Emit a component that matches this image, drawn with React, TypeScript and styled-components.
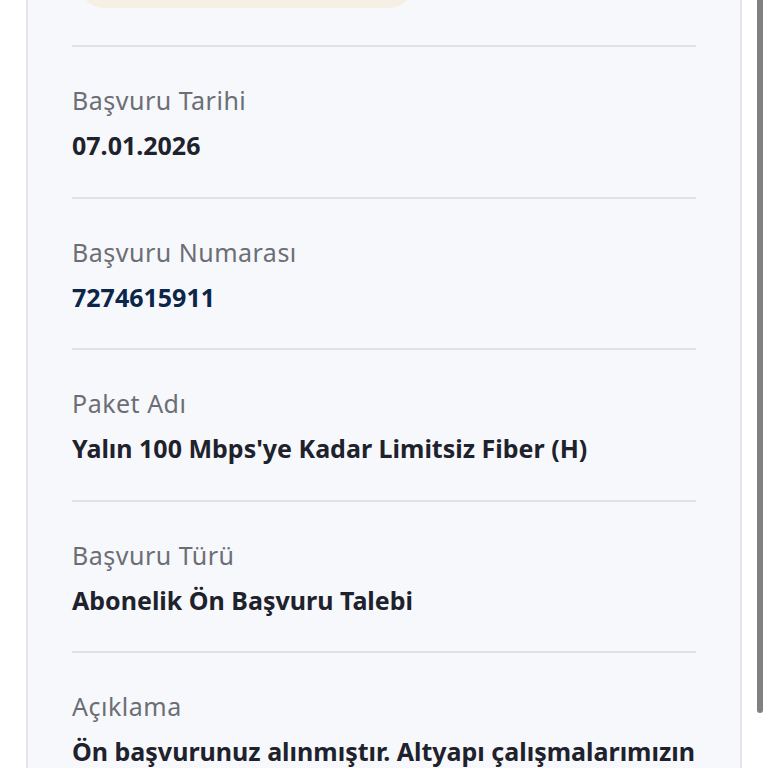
import styled, { createGlobalStyle } from 'styled-components'

const GlobalStyle = createGlobalStyle`
  html, body {
    margin: 0;
    padding: 0;
    background: #ffffff;
    overflow: hidden;
  }
  body {
    font-family: "Noto Sans", "Open Sans", "Liberation Sans", sans-serif;
  }
`

const Page = styled.div`
  width: 768px;
  height: 768px;
  overflow: hidden;
  background: #ffffff;
`

const Card = styled.div`
  margin: -40px 0 0 26px;
  width: 716px;
  box-sizing: border-box;
  background: #f7f8fb;
  border-left: 2px solid #e4e6ea;
  border-right: 2px solid #e4e6ea;
  padding: 0 44px;
`

const StatusPill = styled.div`
  margin: 0 0 37px 8px;
  width: 333px;
  height: 48px;
  border-radius: 24px;
  background: #f6efe3;
`

const Section = styled.div`
  border-top: 2px solid #dfe2e7;
  padding: 35px 0 33.5px;
`

const Label = styled.div`
  font-size: 25px;
  line-height: 36px;
  letter-spacing: 0.5px;
  color: #6b6e75;
  margin-bottom: 9px;
`

const Value = styled.div<{ $navy?: boolean }>`
  font-size: 25px;
  line-height: 36px;
  font-weight: 700;
  color: ${p => (p.$navy ? '#0b2648' : '#1e222c')};
`

const Scrollbar = styled.div`
  position: fixed;
  top: 0;
  left: 757px;
  width: 6px;
  height: 713px;
  border-radius: 0 0 3px 3px;
  background: #808080;
`

const rows = [
  { label: 'Başvuru Tarihi', value: '07.01.2026' },
  { label: 'Başvuru Numarası', value: '7274615911', navy: true },
  { label: 'Paket Adı', value: "Yalın 100 Mbps'ye Kadar Limitsiz Fiber (H)" },
  { label: 'Başvuru Türü', value: 'Abonelik Ön Başvuru Talebi' },
  {
    label: 'Açıklama',
    value:
      'Ön başvurunuz alınmıştır. Altyapı çalışmalarımızın tamamlanmasının ardından sizinle iletişime geçilecektir.',
  },
]

export default function App() {
  return (
    <Page>
      <GlobalStyle />
      <Card>
        <StatusPill />
        {rows.map(r => (
          <Section key={r.label}>
            <Label>{r.label}</Label>
            <Value $navy={r.navy}>{r.value}</Value>
          </Section>
        ))}
      </Card>
      <Scrollbar />
    </Page>
  )
}
